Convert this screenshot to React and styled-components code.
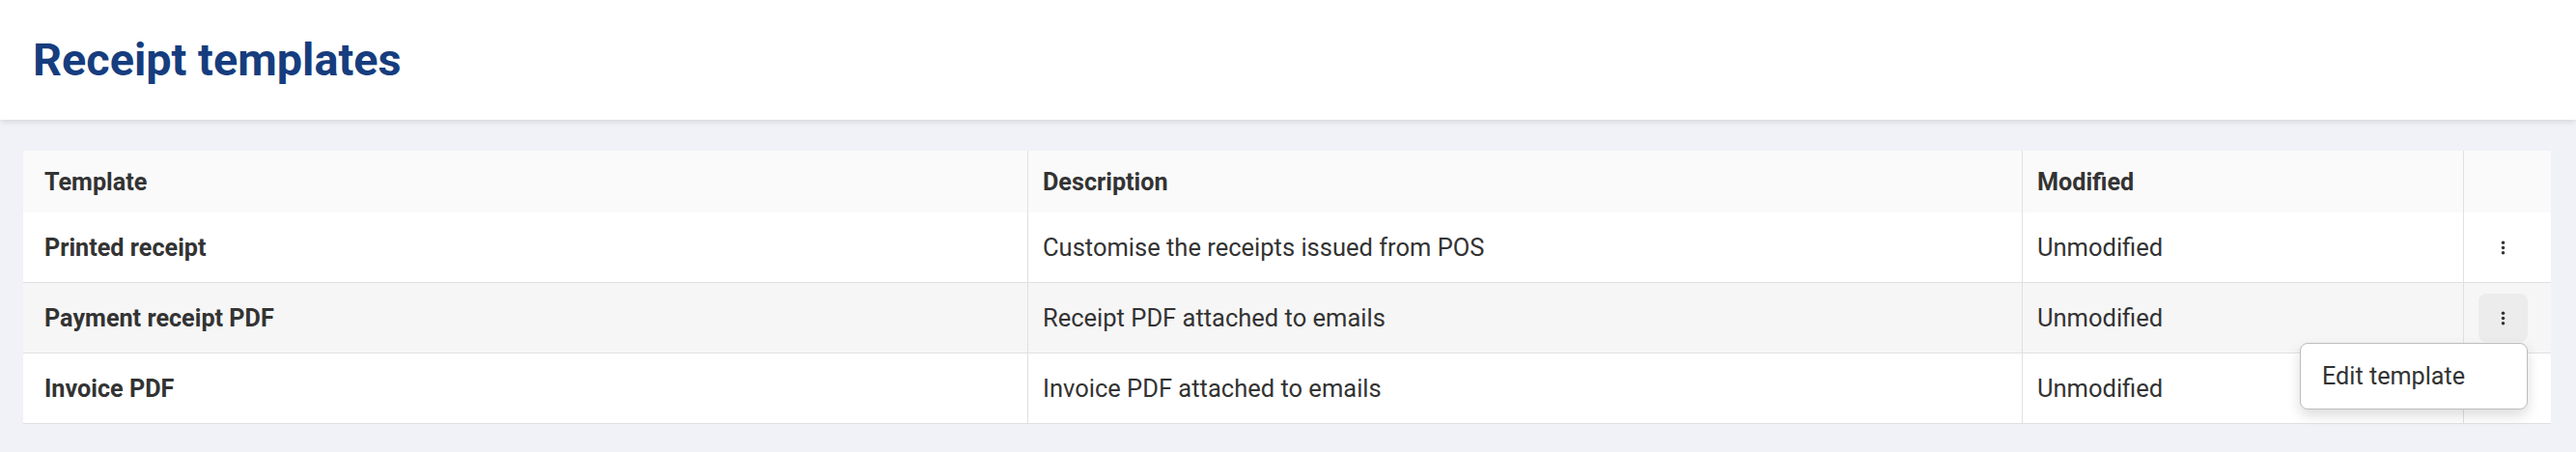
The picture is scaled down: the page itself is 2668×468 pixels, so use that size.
import React from 'react';
import styled, { createGlobalStyle } from 'styled-components';

const GlobalStyle = createGlobalStyle`
  html, body {
    margin: 0;
    padding: 0;
    background: #f1f2f7;
    font-family: Roboto, "Liberation Sans", sans-serif;
    color: #333;
  }
`;

const templates = [
  { id: 1, name: 'Printed receipt', description: 'Customise the receipts issued from POS', modified: 'Unmodified' },
  { id: 2, name: 'Payment receipt PDF', description: 'Receipt PDF attached to emails', modified: 'Unmodified', open: true },
  { id: 3, name: 'Invoice PDF', description: 'Invoice PDF attached to emails', modified: 'Unmodified' },
];

const MoreIcon = () => (
  <svg width="21" height="21" viewBox="0 0 24 24" fill="#333">
    <circle cx="12" cy="6" r="2" />
    <circle cx="12" cy="12" r="2" />
    <circle cx="12" cy="18" r="2" />
  </svg>
);

const App = () => {
  return (
    <Page>
      <GlobalStyle />
      <TopBar>
        <Title>Receipt templates</Title>
      </TopBar>
      <Content>
        <Table>
          <Row $bg="#fafafa" $head>
            <HeadCell $first>Template</HeadCell>
            <HeadCell>Description</HeadCell>
            <HeadCell>Modified</HeadCell>
            <HeadCell />
          </Row>
          {templates.map((t) => (
            <Row key={t.id} $bg={t.open ? '#f6f6f6' : '#ffffff'}>
              <Cell $first $bold>{t.name}</Cell>
              <Cell>{t.description}</Cell>
              <Cell>{t.modified}</Cell>
              <Cell>
                <MenuAnchor>
                  <KebabButton $active={t.open}>
                    <MoreIcon />
                  </KebabButton>
                  {t.open && (
                    <Menu>
                      <MenuItem>Edit template</MenuItem>
                    </Menu>
                  )}
                </MenuAnchor>
              </Cell>
            </Row>
          ))}
        </Table>
      </Content>
    </Page>
  );
};

export default App;

const Page = styled.div`
  min-height: 468px;
  background: #f1f2f7;
`;

const TopBar = styled.header`
  height: 124px;
  display: flex;
  align-items: center;
  padding: 0 34px;
  background: #ffffff;
  box-shadow: 0 2px 6px rgba(0, 0, 0, 0.12);
  position: relative;
  z-index: 1;
`;

const Title = styled.h1`
  margin: 0;
  font-size: 46.8px;
  font-weight: 700;
  color: #163d7e;
`;

const Content = styled.main`
  padding: 32px 26px 0 24px;
`;

const Table = styled.div`
  display: flex;
  flex-direction: column;
`;

const Row = styled.div`
  display: grid;
  grid-template-columns: 1040px 1030px 457px 91px;
  height: ${(p) => (p.$head ? '64px' : '72px')};
  background: ${(p) => p.$bg};
  border-bottom: ${(p) => (p.$head ? 'none' : '1px solid #e0e0e0')};
`;

const HeadCell = styled.div`
  display: flex;
  align-items: center;
  padding-left: ${(p) => (p.$first ? '22px' : '15px')};
  border-left: ${(p) => (p.$first ? 'none' : '1px solid #e0e0e0')};
  font-size: 25.2px;
  font-weight: 700;
  color: #333;
`;

const Cell = styled.div`
  display: flex;
  align-items: center;
  padding-left: ${(p) => (p.$first ? '22px' : '15px')};
  border-left: ${(p) => (p.$first ? 'none' : '1px solid #e0e0e0')};
  font-size: ${(p) => (p.$bold ? '25.2px' : '25.5px')};
  font-weight: ${(p) => (p.$bold ? 700 : 400)};
  color: #333;
`;

const MenuAnchor = styled.div`
  position: relative;
`;

const KebabButton = styled.button`
  width: 51px;
  height: 50px;
  display: flex;
  align-items: center;
  justify-content: center;
  padding: 0;
  border: none;
  border-radius: 8px;
  background: ${(p) => (p.$active ? '#ececec' : 'transparent')};
  cursor: pointer;
`;

const Menu = styled.div`
  position: absolute;
  top: calc(100% + 1px);
  right: 0;
  z-index: 5;
  width: 236px;
  height: 69px;
  box-sizing: border-box;
  display: flex;
  align-items: center;
  background: #ffffff;
  border: 1px solid #bdbdbd;
  border-radius: 8px;
  box-shadow: 0 6px 14px rgba(0, 0, 0, 0.14);
`;

const MenuItem = styled.div`
  padding: 0 22px;
  font-size: 25.2px;
  color: #333;
  white-space: nowrap;
`;
